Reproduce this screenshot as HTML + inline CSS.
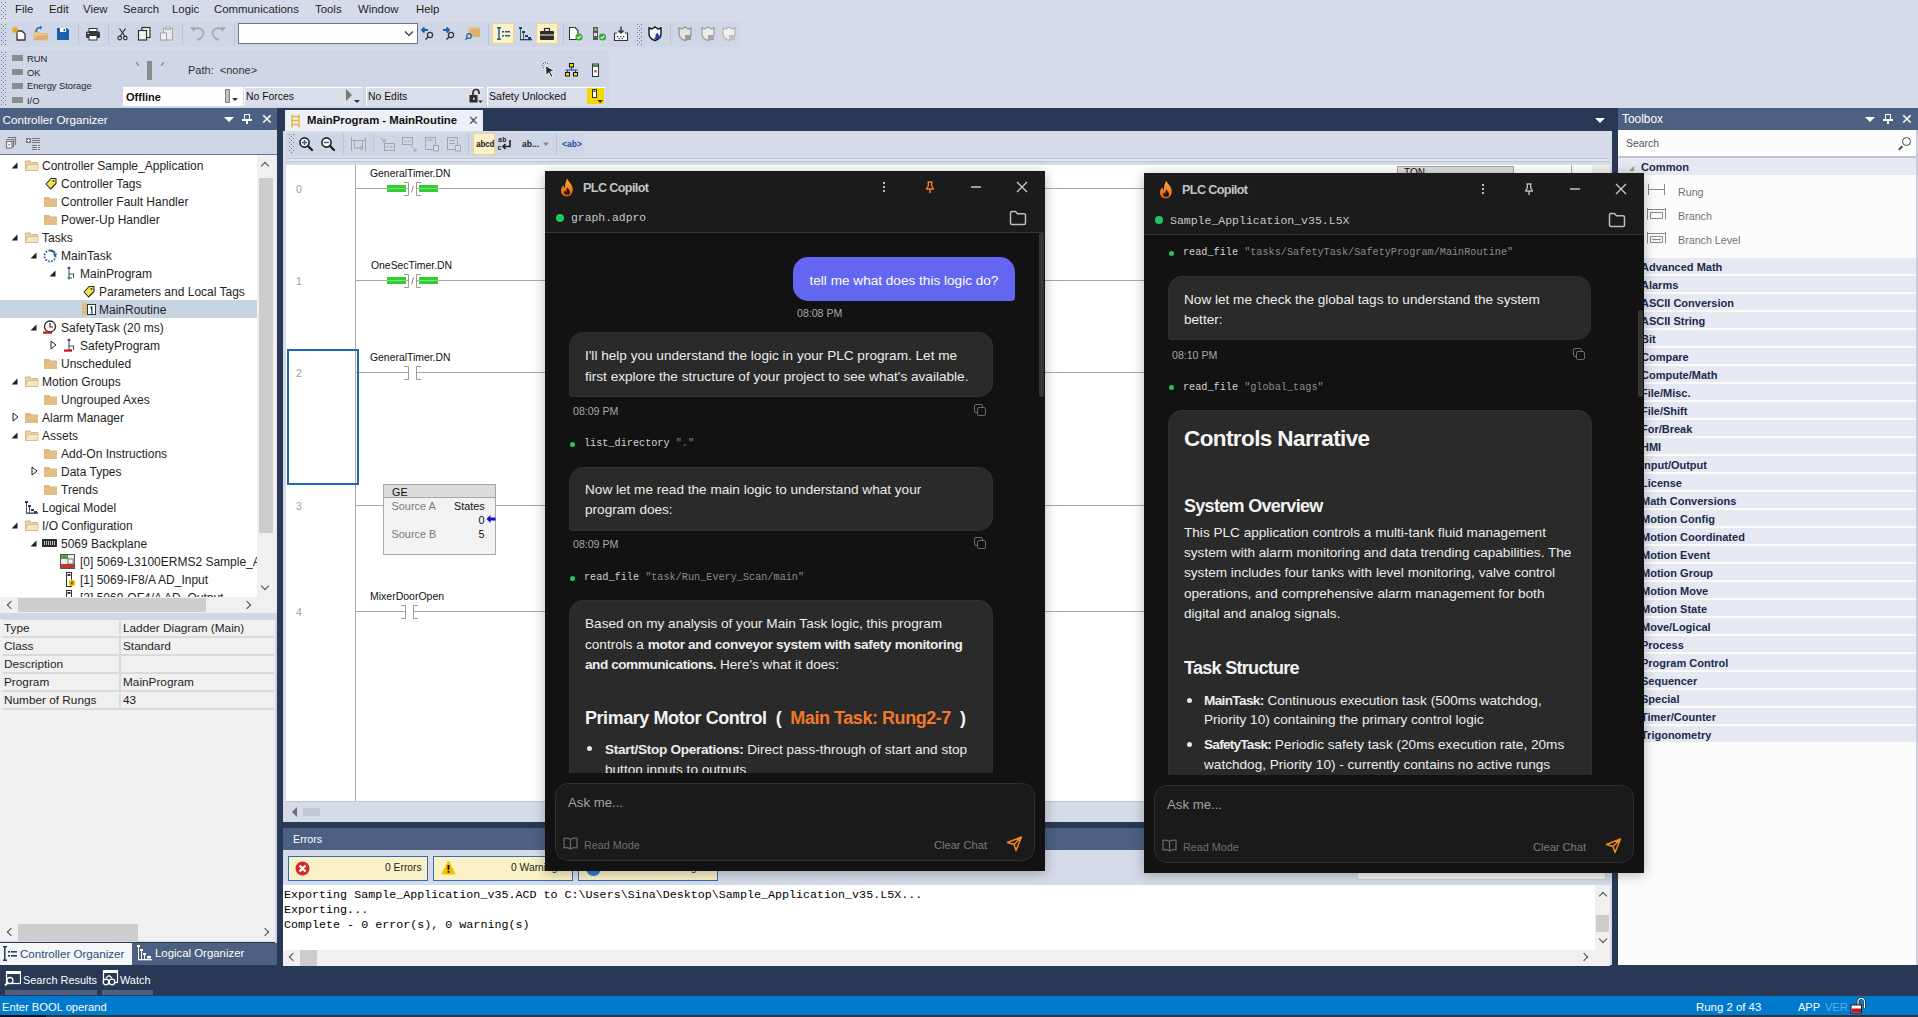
<!DOCTYPE html>
<html><head><meta charset="utf-8">
<style>
*{box-sizing:border-box;margin:0;padding:0}
html,body{width:1918px;height:1017px;overflow:hidden;background:#D6DBE9;font-family:"Liberation Sans",sans-serif;font-size:12px;color:#1E1E1E}
.a{position:absolute}
.t{position:absolute;white-space:nowrap;line-height:1}
.mono{font-family:"Liberation Mono",monospace}
/* ---------- IDE ---------- */
#menu .t{top:4px;font-size:11.4px;color:#1E1E1E}
.grip{position:absolute;width:5px;background-image:radial-gradient(circle at 1px 1px,#6F7C96 0.75px,transparent 0.8px),radial-gradient(circle at 1px 1px,#6F7C96 0.75px,transparent 0.8px);background-size:4px 4px,4px 4px;background-position:0 0,2px 2px}
.tree .row{position:absolute;left:0;height:18px;width:257px}
.tree .row .t{top:4px;font-size:12px;color:#1E1E1E}
.tri{position:absolute;width:0;height:0}
.tri.open{border-left:6px solid transparent;border-bottom:6px solid #1E1E1E;top:6px}
.tri.closed{border-top:5px solid transparent;border-bottom:5px solid transparent;border-left:6px solid #fff;top:4px}
.fold{position:absolute;top:4px;width:14px;height:11px;background:#DCB67A;border-radius:1px}
.prop .r{position:absolute;left:3px;width:271px;height:18px;border-bottom:2px solid #DADADA}
.prop .t{top:3px;font-size:11.8px}
.tb .t{font-size:12px;top:0}
.tbx .cat{position:absolute;left:1622px;width:293px;height:16px;background:#E6E9F2}
.tbx .cat .t{left:20px;top:2px;font-weight:bold;font-size:12px;color:#1B2A4A}
/* ---------- CHAT ---------- */
.chat{position:absolute;width:500px;height:700px;background:#111111;box-shadow:0 0 10px rgba(0,0,0,.35);overflow:hidden;color:#E6E6E6}
.chat .hdr{position:absolute;left:0;top:0;width:500px;height:61px;background:#1B1B1B;border-bottom:1px solid #333}
.chat .ttl{position:absolute;left:37px;top:10px;font-size:13px;font-weight:bold;color:#CFCFCF}
.chat .fname{position:absolute;left:26px;top:41px;font-size:12px;color:#C8C8C8}
.chat .dot{position:absolute;left:10px;top:43px;width:8px;height:8px;border-radius:50%;background:#22C55E}
.bub{position:absolute;background:#2A2A2A;border-radius:14px;color:#EDEDED;font-size:14px;line-height:21px}
.ubub{position:absolute;background:#6366F1;border-radius:14px;color:#fff;font-size:14px;line-height:21px}
.time{position:absolute;font-size:11px;color:#A8A8A8}
.tool{position:absolute;font-size:11px;color:#D0D0D0}
.tool i{font-style:normal;color:#8A8A8A}
.tool b{position:absolute;left:-12px;top:5px;width:5px;height:5px;border-radius:50%;background:#22C55E}
.inp{position:absolute;left:10px;top:612px;width:480px;height:78px;background:#1A1A1A;border:1px solid #2E2E2E;border-radius:12px}
.inp .ph{position:absolute;left:12px;top:12px;font-size:14px;color:#A0A0A0}
.inp .rm{position:absolute;left:28px;top:53px;font-size:11px;color:#6B6B6B}
.inp .cc{position:absolute;left:378px;top:52px;font-size:11px;color:#767676}
</style></head><body>
<svg width="0" height="0" style="position:absolute"><defs><pattern id="gp" width="4" height="4" patternUnits="userSpaceOnUse"><rect x="1" y="0" width="1" height="1" fill="#66738F"/><rect x="3" y="2" width="1" height="1" fill="#66738F"/></pattern></defs></svg>

<!-- MENU -->
<div id="menu" class="a" style="left:0;top:0;width:1918px;height:20px;background:#D6DBE9">
  <svg class="a" style="left:0px;top:2px" width="6" height="17"><rect width="6" height="17" fill="url(#gp)"/></svg>
  <span class="t" style="left:15px">File</span>
  <span class="t" style="left:49px">Edit</span>
  <span class="t" style="left:83px">View</span>
  <span class="t" style="left:123px">Search</span>
  <span class="t" style="left:172px">Logic</span>
  <span class="t" style="left:214px">Communications</span>
  <span class="t" style="left:315px">Tools</span>
  <span class="t" style="left:358px">Window</span>
  <span class="t" style="left:416px">Help</span>
</div>


<!-- TOOLBAR -->
<div class="a" style="left:0;top:22px;width:632px;height:25px;background:#CFD6E5"></div>
<div class="a" style="left:632px;top:22px;width:108px;height:25px;background:#CFD6E5"></div>
<svg class="a" style="left:0px;top:24px" width="6" height="21"><rect width="6" height="21" fill="url(#gp)"/></svg>
<svg class="a" style="left:0;top:0" width="740" height="50" viewBox="0 0 740 50">
 <!-- new -->
 <g transform="translate(11,26)">
  <path d="M6 5 H11 L14 8 V14 H6 Z" fill="#fff" stroke="#333" stroke-width="1.3" stroke-linejoin="round"/>
  <g stroke="#E8A317" stroke-width="1.1"><path d="M4 0.5 V7.5 M0.5 4 H7.5 M1.5 1.5 L6.5 6.5 M6.5 1.5 L1.5 6.5"/></g>
 </g>
 <!-- open -->
 <g transform="translate(33,26)">
  <path d="M1 6 H6 L7.5 7.5 H14.5 V14 H1 Z" fill="#EBCB94" stroke="#DDB26F" stroke-width="0.8"/>
  <path d="M1 14 L3.5 9.5 H15 L13 14 Z" fill="#DDAF68"/>
  <path d="M3 6 C3 2.5 5 1.5 8 1.5" stroke="#1F6FC5" stroke-width="1.6" fill="none"/>
  <path d="M7 -0.5 L9.5 1.5 L7 3.5 Z" fill="#1F6FC5"/>
 </g>
 <!-- save -->
 <g transform="translate(57,28)">
  <path d="M0 0 H10 L12 2 V12 H0 Z" fill="#1B5FAE"/>
  <rect x="3" y="0" width="6" height="4" fill="#fff"/><rect x="6.5" y="0.8" width="1.5" height="2.5" fill="#1B5FAE"/>
  <rect x="2.5" y="7" width="7" height="5" fill="#1B5FAE" stroke="#fff" stroke-width="0"/>
 </g>
 <line x1="78.5" y1="24" x2="78.5" y2="45" stroke="#BCC5D8"/>
 <!-- print -->
 <g transform="translate(86,28)">
  <rect x="3" y="0.5" width="8" height="3" fill="#fff" stroke="#333"/>
  <rect x="0" y="3.5" width="14" height="6.5" rx="1" fill="#3A3A3A"/>
  <rect x="3" y="7.5" width="8" height="4.5" fill="#fff" stroke="#333"/>
  <rect x="1.5" y="5" width="1.5" height="1" fill="#fff"/>
 </g>
 <line x1="108.5" y1="24" x2="108.5" y2="45" stroke="#BCC5D8"/>
 <!-- cut -->
 <g transform="translate(117,28)" stroke="#333" stroke-width="1.2" fill="none">
  <path d="M2.5 0.5 L8 8.5 M8.5 0.5 L3 8.5"/>
  <circle cx="2.7" cy="10" r="1.8"/><circle cx="8.3" cy="10" r="1.8"/>
 </g>
 <!-- copy -->
 <g transform="translate(138,27)">
  <rect x="4" y="0.5" width="8" height="10" fill="#F2F2F2" stroke="#333" stroke-width="1.2"/>
  <rect x="0.5" y="3.5" width="8" height="9.5" fill="#F2F2F2" stroke="#333" stroke-width="1.2"/>
 </g>
 <!-- paste -->
 <g transform="translate(160,27)">
  <rect x="3.5" y="1.5" width="9" height="11.5" fill="#E9E9E9" stroke="#A8A8A8" stroke-width="1.1"/>
  <rect x="6" y="0" width="4" height="2.5" fill="#E9E9E9" stroke="#A8A8A8"/>
  <rect x="0.5" y="6" width="6" height="7" fill="#F2F2F2" stroke="#A8A8A8" stroke-width="1.1"/>
 </g>
 <line x1="182.5" y1="24" x2="182.5" y2="45" stroke="#BCC5D8"/>
 <!-- undo / redo -->
 <path d="M193 30 C198 26 205 29 203 35 C202 38 199 39.5 197 40" stroke="#A8A8A8" stroke-width="1.8" fill="none"/>
 <path d="M190 27.5 L195 27 L194 32 Z" fill="#A8A8A8"/>
 <path d="M223 30 C218 26 211 29 213 35 C214 38 217 39.5 219 40" stroke="#A8A8A8" stroke-width="1.8" fill="none"/>
 <path d="M226 27.5 L221 27 L222 32 Z" fill="#A8A8A8"/>
 <line x1="234.5" y1="24" x2="234.5" y2="45" stroke="#BCC5D8"/>
 <!-- combo -->
 <rect x="238.5" y="23.5" width="179" height="20" fill="#fff" stroke="#6D7482"/>
 <path d="M405 31.5 L409 35.5 L413 31.5" stroke="#333" stroke-width="1.2" fill="none"/>
 <!-- find prev/next -->
 <g transform="translate(421,27)">
  <path d="M1 3 H7 M3.5 0.5 L1 3 L3.5 5.5" stroke="#1F5FAF" stroke-width="1.8" fill="none"/>
  <circle cx="9" cy="8" r="2.6" fill="none" stroke="#333" stroke-width="1.2"/><path d="M7 10 L4.5 12.5" stroke="#333" stroke-width="1.5"/>
 </g>
 <g transform="translate(442,27)">
  <path d="M1 3 H7 M4.5 0.5 L7 3 L4.5 5.5" stroke="#1F5FAF" stroke-width="1.8" fill="none"/>
  <circle cx="9" cy="8" r="2.6" fill="none" stroke="#333" stroke-width="1.2"/><path d="M7 10 L4.5 12.5" stroke="#333" stroke-width="1.5"/>
 </g>
 <!-- find folder -->
 <g transform="translate(465,26)">
  <rect x="3" y="1" width="12" height="9" fill="#E6C38A"/>
  <rect x="5" y="3" width="10" height="8" fill="#DDB26F"/>
  <circle cx="4" cy="10" r="2.3" fill="none" stroke="#1F5FAF" stroke-width="1.2"/><path d="M2.3 11.8 L0.5 13.6" stroke="#1F5FAF" stroke-width="1.5"/>
 </g>
 <line x1="488.5" y1="24" x2="488.5" y2="45" stroke="#BCC5D8"/>
 <!-- highlighted btn 1 -->
 <rect x="492.5" y="23.5" width="21" height="20" fill="#FDF1C9" stroke="#EED28D"/>
 <g transform="translate(497,27)" fill="#1F5F9E">
  <rect x="0" y="0" width="4" height="1.5"/><rect x="1.2" y="0" width="1.5" height="13"/><rect x="0" y="11.5" width="4" height="1.5"/>
  <rect x="5" y="4" width="2" height="1.5"/><rect x="8" y="4" width="5" height="1.5"/>
  <rect x="5" y="8" width="2" height="1.5"/><rect x="8" y="8" width="5" height="1.5"/>
 </g>
 <!-- logical org -->
 <g transform="translate(519,27)" fill="#1F3F66">
  <rect x="0" y="0" width="3" height="2"/><rect x="1" y="2" width="1" height="11" fill="#555"/>
  <rect x="3" y="4" width="3" height="2"/><rect x="4" y="6" width="1" height="6" fill="#555"/>
  <rect x="6" y="8" width="3" height="2"/><rect x="1" y="12" width="12" height="1.3"/>
  <rect x="9" y="10" width="3" height="2"/>
 </g>
 <!-- highlighted btn 3 toolbox -->
 <rect x="536.5" y="23.5" width="21" height="20" fill="#FDF1C9" stroke="#EED28D"/>
 <g transform="translate(540,28)">
  <rect x="4.5" y="0.5" width="5" height="3" fill="none" stroke="#2B2B2B" stroke-width="1.2"/>
  <rect x="0" y="3" width="14" height="9" rx="1" fill="#2B2B2B"/>
  <rect x="0" y="6.5" width="14" height="1" fill="#FDF1C9"/>
 </g>
 <line x1="563.5" y1="24" x2="563.5" y2="45" stroke="#BCC5D8"/>
 <!-- verify doc -->
 <g transform="translate(569,27)">
  <path d="M0.5 0.5 H6 L9 3.5 V12.5 H0.5 Z" fill="#fff" stroke="#333" stroke-width="1.1"/>
  <circle cx="10" cy="10" r="3.6" fill="#3DA642"/><path d="M8.3 10 L9.5 11.3 L11.8 8.8" stroke="#fff" stroke-width="1.1" fill="none"/>
 </g>
 <g transform="translate(593,27)">
  <rect x="0" y="0" width="5" height="13" fill="#5A5A5A"/><rect x="1" y="1.5" width="3" height="2" fill="#9BC47A"/><rect x="1" y="6" width="3" height="3" fill="#ddd"/>
  <circle cx="9.5" cy="10" r="3.6" fill="#3DA642"/><path d="M7.8 10 L9 11.3 L11.3 8.8" stroke="#fff" stroke-width="1.1" fill="none"/>
 </g>
 <g transform="translate(614,26)">
  <path d="M0.5 7 H3 M11 7 H13.5 V14.5 H0.5 V7" stroke="#333" stroke-width="1.2" fill="#fff"/>
  <path d="M7 0.5 V7 M4.5 4.5 L7 7 L9.5 4.5" stroke="#333" stroke-width="1.5" fill="none"/>
  <g fill="#333"><rect x="3" y="10" width="1.3" height="1.3"/><rect x="6" y="10" width="1.3" height="1.3"/><rect x="9" y="10" width="1.3" height="1.3"/><rect x="4.5" y="12" width="1.3" height="1.3"/><rect x="7.5" y="12" width="1.3" height="1.3"/></g>
 </g>
 <!-- shield wrench -->
 <g transform="translate(648,26)">
  <path d="M1 2 L4 3 L7 0.8 L10 3 L13 2 V8 C13 11 10 13.5 7 14.5 C4 13.5 1 11 1 8 Z" fill="#fff" stroke="#111" stroke-width="1.4"/>
  <path d="M7 13 L11 9 M10 8 A2 2 0 1 0 12.5 10" stroke="#1A3FA0" stroke-width="2" fill="none"/>
 </g>
 <line x1="670.5" y1="24" x2="670.5" y2="45" stroke="#BCC5D8"/>
 <g transform="translate(678,26)">
  <path d="M1 2 L4 3 L7 0.8 L10 3 L13 2 V8 C13 11 10 13.5 7 14.5 C4 13.5 1 11 1 8 Z" fill="#E4E4E4" stroke="#9A9A9A" stroke-width="1.4"/>
  <rect x="7" y="9" width="6" height="5" fill="#9A9A9A"/>
 </g>
 <g transform="translate(701,26)">
  <path d="M1 2 L4 3 L7 0.8 L10 3 L13 2 V8 C13 11 10 13.5 7 14.5 C4 13.5 1 11 1 8 Z" fill="#EDEDED" stroke="#A5A5A5" stroke-width="1.4"/>
  <rect x="7" y="9" width="6" height="5" fill="#A5A5A5"/>
 </g>
 <g transform="translate(722,26)">
  <path d="M1 2 L4 3 L7 0.8 L10 3 L13 2 V8 C13 11 10 13.5 7 14.5 C4 13.5 1 11 1 8 Z" fill="#F0F0F0" stroke="#B8B8B8" stroke-width="1.4"/>
  <rect x="7" y="9" width="6" height="5" fill="#C0C0C0"/>
 </g>
</svg>
<svg class="a" style="left:636px;top:24px" width="6" height="21"><rect width="6" height="21" fill="url(#gp)"/></svg>

<!-- STATUS ROW -->
<div class="a" style="left:0;top:50px;width:609px;height:58px;background:#CFD6E5"></div>
<svg class="a" style="left:0px;top:52px" width="6" height="54"><rect width="6" height="54" fill="url(#gp)"/></svg>
<div class="a" style="left:12px;top:55px;width:11px;height:6px;background:#8C8C8C"></div>
<div class="a" style="left:12px;top:69px;width:11px;height:6px;background:#8C8C8C"></div>
<div class="a" style="left:12px;top:83px;width:11px;height:6px;background:#8C8C8C"></div>
<div class="a" style="left:12px;top:97px;width:11px;height:6px;background:#8C8C8C"></div>
<span class="t" style="left:27px;top:53.8px;font-size:9.4px">RUN</span>
<span class="t" style="left:27px;top:67.8px;font-size:9.4px">OK</span>
<span class="t" style="left:27px;top:82px;font-size:9.3px">Energy Storage</span>
<span class="t" style="left:27px;top:95.6px;font-size:9.4px">I/O</span>
<div class="a" style="left:147px;top:61px;width:5px;height:19px;background:#8C8C8C"></div>
<div class="a" style="left:137px;top:62px;width:1px;height:4px;background:#666;transform:rotate(-40deg)"></div>
<div class="a" style="left:162px;top:62px;width:1px;height:4px;background:#666;transform:rotate(40deg)"></div>
<span class="t" style="left:188px;top:65px;font-size:11px;color:#333">Path:&nbsp; &lt;none&gt;</span>
<svg class="a" style="left:542px;top:62px" width="60" height="17">
 <g fill="#555"><rect x="1" y="1" width="1" height="1"/><rect x="3" y="0" width="1" height="1"/><rect x="5" y="1" width="1" height="1"/><rect x="0" y="3" width="1" height="1"/><rect x="1" y="5" width="1" height="1"/></g>
 <path d="M3.5 3.5 L12.5 9 L8.5 9.8 L11 14.5 L9.2 15.3 L6.8 10.8 L4 13.5 Z" fill="#2B2B2B" stroke="#fff" stroke-width="0.9" stroke-linejoin="round"/>
 <rect x="27.5" y="1.5" width="4" height="3.5" fill="#F5E000" stroke="#111" stroke-width="1"/>
 <path d="M29.5 5 V8 M23.5 8 H35.5 M25.5 8 V10.5 M33.5 8 V10.5" stroke="#1A3FC0" stroke-width="1.2" fill="none"/>
 <rect x="23.5" y="10.5" width="4" height="3.5" fill="#F5E000" stroke="#111" stroke-width="1"/>
 <rect x="31.5" y="10.5" width="4" height="3.5" fill="#F5E000" stroke="#111" stroke-width="1"/>
 <rect x="50.5" y="2" width="6" height="12.5" fill="#fff" stroke="#333" stroke-width="1"/>
 <rect x="51" y="2.5" width="5" height="2.5" fill="#4A8A4A"/>
 <rect x="52.3" y="8" width="2.5" height="2.5" fill="#777"/>
</svg>
<div class="a" style="left:123px;top:87px;width:120px;height:19px;background:#fff"></div>
<span class="t" style="left:126px;top:92.3px;font-size:11px;font-weight:bold;color:#111">Offline</span>
<div class="a" style="left:225px;top:89px;width:5px;height:14px;background:#BDBDBD;border:1px solid #888"></div>
<div class="a" style="left:232px;top:98px;width:0;height:0;border-left:3px solid transparent;border-right:3px solid transparent;border-top:3px solid #333"></div>
<div class="a" style="left:244px;top:87px;width:119px;height:19px;background:#D9DEEA;border-top:1px solid #fff;border-left:1px solid #fff"></div>
<span class="t" style="left:246px;top:91.8px;font-size:10.4px;color:#111">No Forces</span>
<div class="a" style="left:346px;top:89px;width:0;height:0;border-top:6px solid transparent;border-bottom:6px solid transparent;border-left:6px solid #777"></div>
<div class="a" style="left:354px;top:100px;width:0;height:0;border-left:3px solid transparent;border-right:3px solid transparent;border-top:3px solid #333"></div>
<div class="a" style="left:366px;top:87px;width:118px;height:19px;background:#D9DEEA;border-top:1px solid #fff;border-left:1px solid #fff"></div>
<span class="t" style="left:368px;top:91.8px;font-size:10.4px;color:#111">No Edits</span>
<svg class="a" style="left:468px;top:88px" width="16" height="17"><path d="M5 7 V4.5 A3 3 0 0 1 11 4.5 V6" stroke="#2B2B2B" stroke-width="1.7" fill="none"/><rect x="1.5" y="7" width="8" height="7.5" fill="#2B2B2B"/><rect x="5" y="9.5" width="1.5" height="2.5" fill="#ddd"/><path d="M10 12.5 H15 L12.5 15 Z" fill="#2B2B2B"/></svg>
<div class="a" style="left:487px;top:87px;width:119px;height:19px;background:#D9DEEA;border-top:1px solid #fff;border-left:1px solid #fff"></div>
<span class="t" style="left:489px;top:91.2px;font-size:10.6px;color:#111">Safety Unlocked</span>
<svg class="a" style="left:587px;top:87px" width="18" height="19"><rect x="0" y="1" width="17" height="16" fill="#F5D800"/><rect x="5.5" y="2.5" width="4" height="8" fill="#fff" stroke="#333" stroke-width="1"/><rect x="6.5" y="3.5" width="2" height="1.5" fill="#333"/><path d="M10.5 13 H16 L13.2 16 Z" fill="#2B2B2B"/></svg>

<!-- NAVY BACKGROUND -->
<div class="a" style="left:0;top:108px;width:1918px;height:888px;background:#293955"></div>


<!-- CONTROLLER ORGANIZER -->
<div class="a" style="left:0;top:108px;width:277px;height:22px;background:#4D6082"></div>
<span class="t" style="left:2.5px;top:114px;font-size:11.7px;color:#fff">Controller Organizer</span>
<div class="a" style="left:224px;top:117px;width:0;height:0;border-left:5px solid transparent;border-right:5px solid transparent;border-top:5px solid #fff"></div>
<div class="a" style="left:244px;top:114px;width:6px;height:6px;border:1.5px solid #fff;border-top-width:1px"></div>
<div class="a" style="left:246px;top:120px;width:1.5px;height:4px;background:#fff"></div>
<div class="a" style="left:242px;top:119px;width:10px;height:1.5px;background:#fff"></div>
<span class="t" style="left:261px;top:112px;font-size:14px;color:#fff">&#10005;</span>
<div class="a" style="left:0;top:130px;width:277px;height:25px;background:#CFD6E5"></div>
<svg class="a" style="left:5px;top:136px" width="38" height="15">
 <path d="M10.5 9 V1.5 H3" stroke="#777" stroke-width="1.2" fill="none"/>
 <path d="M8.5 11 V3.5 H1" stroke="#777" stroke-width="1.2" fill="none"/>
 <rect x="1.5" y="5.5" width="5.5" height="6.5" fill="#fff" stroke="#777" stroke-width="1.2"/>
 <rect x="3" y="8.3" width="2.5" height="1" fill="#777"/>
 <rect x="21" y="2" width="5" height="5" fill="#777"/><path d="M23.5 3 V6 M22 4.5 H25" stroke="#fff" stroke-width="1"/>
 <g fill="#777"><rect x="27" y="2" width="8" height="1"/><rect x="27" y="4" width="8" height="1"/><rect x="27" y="6" width="8" height="1"/>
 <rect x="27" y="9" width="5" height="1"/><rect x="33" y="9" width="2" height="1"/><rect x="27" y="11" width="5" height="1"/><rect x="33" y="11" width="2" height="1"/><rect x="27" y="13" width="5" height="1"/><rect x="33" y="13" width="2" height="1"/></g>
</svg>
<div class="a" style="left:0;top:154px;width:277px;height:1px;background:#6E7588"></div>
<div class="a tree" style="left:0;top:155px;width:257px;height:442px;background:#fff;overflow:hidden">
<div style="position:absolute;left:0;top:-155px;width:277px;height:800px">
<div class="row" style="top:156px"><svg class="a" style="left:11px;top:6px" width="7" height="7"><path d="M6.5 0.5 V6.5 H0.5 Z" fill="#1E1E1E"/></svg><svg class="a" style="left:25px;top:3px" width="16" height="16"><path d="M0.5 2 H5 L6.5 3.5 H12.5 V11.5 H0.5 Z" fill="#E9D3A9" stroke="#D9B779" stroke-width="1"/><path d="M0.5 11.5 L2.5 5.5 H13.5 L12.5 11.5 Z" fill="#F3E6CC" stroke="#D9B779" stroke-width="0.8"/></svg><span class="t" style="left:42px">Controller Sample_Application</span></div>
<div class="row" style="top:174px"><svg class="a" style="left:45px;top:3px" width="16" height="16"><path d="M1 7 L6 1.5 H11 V6.5 L5.5 12 Z" fill="#F0E44A" stroke="#2B2B2B" stroke-width="1.1" stroke-linejoin="round"/><circle cx="8.5" cy="4" r="0.9" fill="#2B2B2B"/></svg><span class="t" style="left:61px">Controller Tags</span></div>
<div class="row" style="top:192px"><svg class="a" style="left:44px;top:3px" width="16" height="16"><path d="M0 2 H5 L6.5 3.5 H13 V12 H0 Z" fill="#DDB77A"/><rect x="0" y="4.5" width="13" height="7.5" fill="#E3BF85"/></svg><span class="t" style="left:61px">Controller Fault Handler</span></div>
<div class="row" style="top:210px"><svg class="a" style="left:44px;top:3px" width="16" height="16"><path d="M0 2 H5 L6.5 3.5 H13 V12 H0 Z" fill="#DDB77A"/><rect x="0" y="4.5" width="13" height="7.5" fill="#E3BF85"/></svg><span class="t" style="left:61px">Power-Up Handler</span></div>
<div class="row" style="top:228px"><svg class="a" style="left:11px;top:6px" width="7" height="7"><path d="M6.5 0.5 V6.5 H0.5 Z" fill="#1E1E1E"/></svg><svg class="a" style="left:25px;top:3px" width="16" height="16"><path d="M0.5 2 H5 L6.5 3.5 H12.5 V11.5 H0.5 Z" fill="#E9D3A9" stroke="#D9B779" stroke-width="1"/><path d="M0.5 11.5 L2.5 5.5 H13.5 L12.5 11.5 Z" fill="#F3E6CC" stroke="#D9B779" stroke-width="0.8"/></svg><span class="t" style="left:42px">Tasks</span></div>
<div class="row" style="top:246px"><svg class="a" style="left:30px;top:6px" width="7" height="7"><path d="M6.5 0.5 V6.5 H0.5 Z" fill="#1E1E1E"/></svg><svg class="a" style="left:43px;top:3px" width="16" height="16"><path d="M7 1.5 A5.5 5.5 0 1 0 12.5 7" stroke="#1F5F9E" stroke-width="1.8" stroke-dasharray="1.6 1.4" fill="none"/><path d="M7 1.5 A5.5 5.5 0 0 1 12 4.5" stroke="#1F5F9E" stroke-width="1.8" fill="none"/><path d="M10 5 L14 4.5 L12.5 8.5 Z" fill="#1F5F9E"/></svg><span class="t" style="left:61px">MainTask</span></div>
<div class="row" style="top:264px"><svg class="a" style="left:49px;top:6px" width="7" height="7"><path d="M6.5 0.5 V6.5 H0.5 Z" fill="#1E1E1E"/></svg><svg class="a" style="left:66px;top:2px" width="16" height="16"><circle cx="3" cy="2" r="1.6" fill="#7A3E9D"/><path d="M3 3.5 V12 H6" stroke="#1F5F9E" stroke-width="1.1" fill="none"/><path d="M3 8 H7.5 V12" stroke="#555" stroke-width="1.1" fill="none"/><circle cx="3" cy="12" r="1.6" fill="#3DA642"/></svg><span class="t" style="left:80px">MainProgram</span></div>
<div class="row" style="top:282px"><svg class="a" style="left:83px;top:3px" width="16" height="16"><path d="M1 7 L6 1.5 H11 V6.5 L5.5 12 Z" fill="#F0E44A" stroke="#2B2B2B" stroke-width="1.1" stroke-linejoin="round"/><circle cx="8.5" cy="4" r="0.9" fill="#2B2B2B"/></svg><span class="t" style="left:99px">Parameters and Local Tags</span></div>
<div class="row" style="top:300px;background:#C9D4E3"><svg class="a" style="left:82px;top:2px" width="16" height="16"><path d="M1 0.5 V13.5 M4 0.5 V13.5 M1 3 H4 M1 6.5 H4 M1 10 H4" stroke="#E0B040" stroke-width="1.2"/><rect x="5.5" y="2.5" width="8" height="10" fill="#fff" stroke="#333" stroke-width="1"/><path d="M8.5 5 L10 4.5 V11 M8.5 11 H11" stroke="#1F5F9E" stroke-width="1"/></svg><span class="t" style="left:99px">MainRoutine</span></div>
<div class="row" style="top:318px"><svg class="a" style="left:30px;top:6px" width="7" height="7"><path d="M6.5 0.5 V6.5 H0.5 Z" fill="#1E1E1E"/></svg><svg class="a" style="left:43px;top:2px" width="16" height="16"><circle cx="7" cy="6.5" r="5.5" fill="#fff" stroke="#2B2B2B" stroke-width="1.3"/><path d="M7 3 V7 H10" stroke="#2B2B2B" stroke-width="1.2" fill="none"/><rect x="0" y="11.5" width="9" height="2.2" fill="#D01010"/></svg><span class="t" style="left:61px">SafetyTask (20 ms)</span></div>
<div class="row" style="top:336px"><svg class="a" style="left:50px;top:4px" width="7" height="10"><path d="M1 1 L6 5 L1 9 Z" fill="#fff" stroke="#1E1E1E" stroke-width="1"/></svg><svg class="a" style="left:64px;top:2px" width="16" height="16"><circle cx="5" cy="2" r="1.6" fill="#7A3E9D"/><path d="M5 3.5 V12 H8" stroke="#1F5F9E" stroke-width="1.1" fill="none"/><path d="M5 8 H9.5 V12" stroke="#555" stroke-width="1.1" fill="none"/><rect x="0" y="11.5" width="8" height="2.2" fill="#D01010"/></svg><span class="t" style="left:80px">SafetyProgram</span></div>
<div class="row" style="top:354px"><svg class="a" style="left:44px;top:3px" width="16" height="16"><path d="M0 2 H5 L6.5 3.5 H13 V12 H0 Z" fill="#DDB77A"/><rect x="0" y="4.5" width="13" height="7.5" fill="#E3BF85"/></svg><span class="t" style="left:61px">Unscheduled</span></div>
<div class="row" style="top:372px"><svg class="a" style="left:11px;top:6px" width="7" height="7"><path d="M6.5 0.5 V6.5 H0.5 Z" fill="#1E1E1E"/></svg><svg class="a" style="left:25px;top:3px" width="16" height="16"><path d="M0.5 2 H5 L6.5 3.5 H12.5 V11.5 H0.5 Z" fill="#E9D3A9" stroke="#D9B779" stroke-width="1"/><path d="M0.5 11.5 L2.5 5.5 H13.5 L12.5 11.5 Z" fill="#F3E6CC" stroke="#D9B779" stroke-width="0.8"/></svg><span class="t" style="left:42px">Motion Groups</span></div>
<div class="row" style="top:390px"><svg class="a" style="left:44px;top:3px" width="16" height="16"><path d="M0 2 H5 L6.5 3.5 H13 V12 H0 Z" fill="#DDB77A"/><rect x="0" y="4.5" width="13" height="7.5" fill="#E3BF85"/></svg><span class="t" style="left:61px">Ungrouped Axes</span></div>
<div class="row" style="top:408px"><svg class="a" style="left:12px;top:4px" width="7" height="10"><path d="M1 1 L6 5 L1 9 Z" fill="#fff" stroke="#1E1E1E" stroke-width="1"/></svg><svg class="a" style="left:25px;top:3px" width="16" height="16"><path d="M0 2 H5 L6.5 3.5 H13 V12 H0 Z" fill="#DDB77A"/><rect x="0" y="4.5" width="13" height="7.5" fill="#E3BF85"/></svg><span class="t" style="left:42px">Alarm Manager</span></div>
<div class="row" style="top:426px"><svg class="a" style="left:11px;top:6px" width="7" height="7"><path d="M6.5 0.5 V6.5 H0.5 Z" fill="#1E1E1E"/></svg><svg class="a" style="left:25px;top:3px" width="16" height="16"><path d="M0.5 2 H5 L6.5 3.5 H12.5 V11.5 H0.5 Z" fill="#E9D3A9" stroke="#D9B779" stroke-width="1"/><path d="M0.5 11.5 L2.5 5.5 H13.5 L12.5 11.5 Z" fill="#F3E6CC" stroke="#D9B779" stroke-width="0.8"/></svg><span class="t" style="left:42px">Assets</span></div>
<div class="row" style="top:444px"><svg class="a" style="left:44px;top:3px" width="16" height="16"><path d="M0 2 H5 L6.5 3.5 H13 V12 H0 Z" fill="#DDB77A"/><rect x="0" y="4.5" width="13" height="7.5" fill="#E3BF85"/></svg><span class="t" style="left:61px">Add-On Instructions</span></div>
<div class="row" style="top:462px"><svg class="a" style="left:31px;top:4px" width="7" height="10"><path d="M1 1 L6 5 L1 9 Z" fill="#fff" stroke="#1E1E1E" stroke-width="1"/></svg><svg class="a" style="left:44px;top:3px" width="16" height="16"><path d="M0 2 H5 L6.5 3.5 H13 V12 H0 Z" fill="#DDB77A"/><rect x="0" y="4.5" width="13" height="7.5" fill="#E3BF85"/></svg><span class="t" style="left:61px">Data Types</span></div>
<div class="row" style="top:480px"><svg class="a" style="left:44px;top:3px" width="16" height="16"><path d="M0 2 H5 L6.5 3.5 H13 V12 H0 Z" fill="#DDB77A"/><rect x="0" y="4.5" width="13" height="7.5" fill="#E3BF85"/></svg><span class="t" style="left:61px">Trends</span></div>
<div class="row" style="top:498px"><svg class="a" style="left:25px;top:3px" width="16" height="16"><g fill="#1F3F66"><rect x="0" y="0" width="3" height="2"/><rect x="3" y="4" width="3" height="2"/><rect x="6" y="8" width="3" height="2"/><rect x="9" y="10" width="3" height="2"/><rect x="1" y="11.5" width="12" height="1.3"/></g><rect x="1" y="2" width="1" height="10" fill="#555"/><rect x="4" y="6" width="1" height="6" fill="#555"/></svg><span class="t" style="left:42px">Logical Model</span></div>
<div class="row" style="top:516px"><svg class="a" style="left:11px;top:6px" width="7" height="7"><path d="M6.5 0.5 V6.5 H0.5 Z" fill="#1E1E1E"/></svg><svg class="a" style="left:25px;top:3px" width="16" height="16"><path d="M0.5 2 H5 L6.5 3.5 H12.5 V11.5 H0.5 Z" fill="#E9D3A9" stroke="#D9B779" stroke-width="1"/><path d="M0.5 11.5 L2.5 5.5 H13.5 L12.5 11.5 Z" fill="#F3E6CC" stroke="#D9B779" stroke-width="0.8"/></svg><span class="t" style="left:42px">I/O Configuration</span></div>
<div class="row" style="top:534px"><svg class="a" style="left:30px;top:6px" width="7" height="7"><path d="M6.5 0.5 V6.5 H0.5 Z" fill="#1E1E1E"/></svg><svg class="a" style="left:42px;top:2px" width="16" height="16"><rect x="0" y="3" width="15" height="8" rx="1" fill="#2B2B2B"/><g fill="#bbb"><rect x="2" y="5" width="1" height="4"/><rect x="4" y="5" width="1" height="4"/><rect x="6" y="5" width="1" height="4"/><rect x="8" y="5" width="1" height="4"/><rect x="10" y="5" width="1" height="4"/><rect x="12" y="5" width="1" height="4"/></g></svg><span class="t" style="left:61px">5069 Backplane</span></div>
<div class="row" style="top:552px"><svg class="a" style="left:60px;top:2px" width="16" height="16"><rect x="0.5" y="0.5" width="14" height="14" fill="#ECECEC" stroke="#555"/><rect x="1" y="1" width="7" height="4" fill="#5B9A4A"/><rect x="1" y="10" width="13" height="4" fill="#C0392B"/><rect x="8" y="5" width="5" height="5" fill="#fff" stroke="#555" stroke-width="0.8"/></svg><span class="t" style="left:80px">[0] 5069-L3100ERMS2 Sample_Application</span></div>
<div class="row" style="top:570px"><svg class="a" style="left:63px;top:2px" width="16" height="16"><rect x="3.5" y="0.5" width="5" height="14" fill="#fff" stroke="#333"/><rect x="4.5" y="2" width="3" height="2" fill="#333"/><circle cx="9" cy="11" r="3.3" fill="#F0C400"/><rect x="8" y="9.5" width="0.8" height="3" fill="#333"/><rect x="9.4" y="9.5" width="0.8" height="3" fill="#333"/></svg><span class="t" style="left:80px">[1] 5069-IF8/A AD_Input</span></div>
<div class="row" style="top:588px"><svg class="a" style="left:63px;top:2px" width="16" height="16"><rect x="3.5" y="0.5" width="5" height="14" fill="#fff" stroke="#333"/><rect x="4.5" y="2" width="3" height="2" fill="#333"/></svg><span class="t" style="left:80px">[2] 5069-OF4/A AD_Output</span></div>
</div>
</div>
<!-- tree vscroll -->
<div class="a" style="left:257px;top:155px;width:18px;height:442px;background:#F0F0F0"></div>
<div class="a" style="left:259px;top:178px;width:14px;height:355px;background:#CDCDCD"></div>
<div class="a" style="left:262px;top:163px;width:6px;height:6px;border-left:1.7px solid #4A4A4A;border-top:1.7px solid #4A4A4A;transform:rotate(45deg)"></div>
<div class="a" style="left:262px;top:583px;width:6px;height:6px;border-right:1.7px solid #4A4A4A;border-bottom:1.7px solid #4A4A4A;transform:rotate(45deg)"></div>
<div class="a" style="left:275px;top:155px;width:2px;height:458px;background:#E9ECF2"></div>
<!-- tree hscroll -->
<div class="a" style="left:0;top:597px;width:275px;height:16px;background:#F0F0F0"></div>
<div class="a" style="left:18px;top:598px;width:188px;height:14px;background:#CDCDCD"></div>
<div class="a" style="left:8px;top:602px;width:6px;height:6px;border-left:1.7px solid #4A4A4A;border-bottom:1.7px solid #4A4A4A;transform:rotate(45deg)"></div>
<div class="a" style="left:244px;top:602px;width:6px;height:6px;border-right:1.7px solid #4A4A4A;border-top:1.7px solid #4A4A4A;transform:rotate(45deg)"></div>
<!-- splitter -->
<div class="a" style="left:0;top:613px;width:277px;height:6px;background:#CFD6E5"></div>
<!-- properties -->
<div class="a prop" style="left:0;top:619px;width:277px;height:305px;background:#F0F0F0">
  <div class="a" style="left:2px;top:0;width:272px;height:92px;background:#F0F0F0;border-top:1px solid #DADADA"></div>
  <div class="a" style="left:119px;top:1px;width:2px;height:90px;background:#DADADA"></div>
  <div class="r" style="top:1px"><span class="t" style="left:1px">Type</span><span class="t" style="left:120px">Ladder Diagram (Main)</span></div>
  <div class="r" style="top:19px"><span class="t" style="left:1px">Class</span><span class="t" style="left:120px">Standard</span></div>
  <div class="r" style="top:37px"><span class="t" style="left:1px">Description</span></div>
  <div class="r" style="top:55px"><span class="t" style="left:1px">Program</span><span class="t" style="left:120px">MainProgram</span></div>
  <div class="r" style="top:73px"><span class="t" style="left:1px">Number of Rungs</span><span class="t" style="left:120px">43</span></div>
</div>
<div class="a" style="left:0;top:924px;width:277px;height:18px;background:#F0F0F0;border-bottom:1px solid #DADADA"></div>
<div class="a" style="left:18px;top:924px;width:120px;height:17px;background:#CDCDCD"></div>
<div class="a" style="left:8px;top:929px;width:6px;height:6px;border-left:1.7px solid #4A4A4A;border-bottom:1.7px solid #4A4A4A;transform:rotate(45deg)"></div>
<div class="a" style="left:262px;top:929px;width:6px;height:6px;border-right:1.7px solid #4A4A4A;border-top:1.7px solid #4A4A4A;transform:rotate(45deg)"></div>
<div class="a" style="left:275px;top:619px;width:2px;height:324px;background:#CFD6E5"></div>
<!-- bottom tabs -->
<div class="a" style="left:0;top:943px;width:132px;height:22px;background:#F5F6F8"></div>
<div class="a" style="left:132px;top:943px;width:145px;height:22px;background:#4D6082"></div>
<svg class="a" style="left:3px;top:946px" width="15" height="16"><g fill="#1F3F66"><rect x="0" y="0" width="4" height="1.5"/><rect x="1" y="0" width="1.5" height="15"/><rect x="0" y="13.5" width="4" height="1.5"/><rect x="5" y="5" width="2" height="1.6"/><rect x="8" y="5" width="6" height="1.6"/><rect x="5" y="9" width="2" height="1.6"/><rect x="8" y="9" width="6" height="1.6"/></g></svg>
<span class="t" style="left:20px;top:947.5px;font-size:11.6px;color:#1F4E79">Controller Organizer</span>
<svg class="a" style="left:137px;top:945px" width="16" height="16"><g fill="#fff"><rect x="0" y="0" width="3" height="2"/><rect x="3" y="4" width="3" height="2"/><rect x="6" y="8" width="3" height="2"/><rect x="10" y="11" width="4" height="2.5"/><rect x="1" y="14" width="14" height="1.3"/><rect x="1" y="2" width="1" height="12"/><rect x="4" y="6" width="1" height="8"/><rect x="7" y="10" width="1" height="4"/></g></svg>
<span class="t" style="left:155px;top:948px;font-size:11.4px;color:#fff">Logical Organizer</span>
<!-- search results / watch -->
<svg class="a" style="left:4px;top:971px" width="17" height="16"><rect x="2.5" y="0.5" width="14" height="12" fill="none" stroke="#fff" stroke-width="1.2"/><rect x="2.5" y="0.5" width="14" height="2.5" fill="#fff"/><circle cx="6" cy="9.5" r="3" fill="#293955" stroke="#fff" stroke-width="1.3"/><path d="M4 11.5 L1 14.5" stroke="#fff" stroke-width="1.8"/></svg>
<span class="t" style="left:23px;top:974.5px;font-size:10.9px;color:#fff">Search Results</span>
<svg class="a" style="left:101px;top:970px" width="18" height="17"><rect x="2.5" y="0.5" width="14" height="12" fill="none" stroke="#fff" stroke-width="1.2"/><rect x="2.5" y="0.5" width="14" height="2.5" fill="#fff"/><circle cx="5" cy="12" r="2.8" fill="#293955" stroke="#fff" stroke-width="1.3"/><circle cx="11" cy="12" r="2.8" fill="#293955" stroke="#fff" stroke-width="1.3"/><path d="M5 8 L8 5.5 L11 8" stroke="#fff" stroke-width="1.2" fill="none"/></svg>
<span class="t" style="left:120px;top:974.5px;font-size:10.9px;color:#fff">Watch</span>
<div class="a" style="left:5px;top:990px;width:92px;height:5px;background:#4D6082"></div>
<div class="a" style="left:102px;top:990px;width:51px;height:5px;background:#4D6082"></div>


<!-- EDITOR TAB -->
<div class="a" style="left:285px;top:110px;width:198px;height:21px;background:#EEF0F7"></div>
<svg class="a" style="left:291px;top:114px" width="10" height="14"><path d="M1 0.5 V13.5 M8 0.5 V13.5 M1 2.5 H8 M1 6.5 H8 M1 10.5 H8" stroke="#E3B341" stroke-width="1.4"/></svg>
<span class="t" style="left:307px;top:115px;font-size:11.3px;font-weight:bold;color:#111">MainProgram - MainRoutine</span>
<span class="t" style="left:468px;top:114px;font-size:13px;color:#555">&#10005;</span>
<div class="a" style="left:1595px;top:118px;width:0;height:0;border-left:5px solid transparent;border-right:5px solid transparent;border-top:5px solid #fff"></div>
<!-- EDITOR PANEL -->
<div class="a" style="left:283px;top:131px;width:1329px;height:691px;background:#D6DBE9"></div>
<div class="a" style="left:286px;top:133px;width:298px;height:23px;background:#CFD6E5"></div>
<svg class="a" style="left:288px;top:134px" width="6" height="20"><rect width="6" height="20" fill="url(#gp)"/></svg>
<!-- zoom in/out -->
<svg class="a" style="left:286px;top:131px" width="300" height="26" viewBox="286 131 300 26">
 <g transform="translate(299,137)">
  <circle cx="5.5" cy="5.5" r="4.6" fill="#fff" stroke="#222" stroke-width="1.6"/>
  <path d="M3 5.5 H8 M5.5 3 V8" stroke="#1F5F9E" stroke-width="1.4"/>
  <path d="M9 9 L13 13" stroke="#222" stroke-width="2.4" stroke-linecap="round"/>
 </g>
 <g transform="translate(321,137)">
  <circle cx="5.5" cy="5.5" r="4.6" fill="#fff" stroke="#222" stroke-width="1.6"/>
  <path d="M3 5.5 H8" stroke="#1F5F9E" stroke-width="1.4"/>
  <path d="M9 9 L13 13" stroke="#222" stroke-width="2.4" stroke-linecap="round"/>
 </g>
 <line x1="343.5" y1="134" x2="343.5" y2="154" stroke="#BCC5D8"/>
 <g transform="translate(351,137)" stroke="#A5A5A5" stroke-width="1" fill="none">
  <path d="M0.5 0 V14 M14.5 0 V14 M0.5 3.5 H14.5 M3.5 3.5 V11 H11.5 V3.5"/><path d="M9 9 L12 11 L9 13" />
 </g>
 <line x1="373.5" y1="134" x2="373.5" y2="154" stroke="#BCC5D8"/>
 <g transform="translate(380,137)" stroke="#A5A5A5" stroke-width="1" fill="none">
  <path d="M0.5 0.5 L5 5 M2 5 H5 V2"/><rect x="4.5" y="6.5" width="10" height="7"/><path d="M6.5 10 H8.5 M10 10 H12.5"/>
 </g>
 <g transform="translate(402,137)" stroke="#A5A5A5" stroke-width="1" fill="none">
  <rect x="0.5" y="0.5" width="10" height="7"/><path d="M2.5 4 H4.5 M6 4 H8.5"/><path d="M9 9 L14 14 M14 11 V14 H11"/>
 </g>
 <g transform="translate(425,137)" stroke="#A5A5A5" stroke-width="1" fill="none">
  <rect x="0.5" y="0.5" width="10" height="12"/><path d="M2.5 3 H8"/><rect x="8.5" y="8.5" width="5" height="5.5" fill="#D6DBE9"/>
 </g>
 <g transform="translate(447,137)" stroke="#A5A5A5" stroke-width="1" fill="none">
  <rect x="0.5" y="0.5" width="10" height="12"/><path d="M2.5 3.5 H8 M2.5 6.5 H8"/><rect x="8.5" y="8.5" width="5" height="5.5" fill="#D6DBE9"/>
 </g>
 <line x1="468.5" y1="134" x2="468.5" y2="154" stroke="#BCC5D8"/>
 <rect x="473.5" y="133.5" width="21" height="21" fill="#FDF1C9" stroke="#EED28D"/>
 <text x="476" y="147" font-family="Liberation Mono" font-size="8.2" font-weight="bold" fill="#222" letter-spacing="-0.4">abcd</text>
 <text x="498" y="141.5" font-family="Liberation Mono" font-size="7" font-weight="bold" fill="#222">ab</text>
 <text x="497.5" y="149.5" font-family="Liberation Mono" font-size="7" font-weight="bold" fill="#222">c</text>
 <path d="M510 140 V146.5 H503 M505.5 144 L503 146.5 L505.5 149" stroke="#222" stroke-width="1.6" fill="none"/>
 <text x="522" y="147" font-family="Liberation Sans" font-size="8.5" font-weight="bold" fill="#222">ab...</text>
 <path d="M543 142.5 H549 L546 146 Z" fill="#888"/>
 <line x1="556.5" y1="134" x2="556.5" y2="154" stroke="#BCC5D8"/>
 <text x="562" y="147" font-family="Liberation Sans" font-size="8.5" font-weight="bold" fill="#1F4E9E">&lt;ab&gt;</text>
</svg>
<!-- separator -->
<div class="a" style="left:286px;top:158px;width:1324px;height:4px;border-top:1px solid #BCC5D8;border-bottom:1px solid #BCC5D8;background:#E2E6EF"></div>
<!-- LADDER -->
<div class="a" style="left:286px;top:164px;width:1324px;height:637px;background:#FFFFFF;overflow:hidden">
  <div class="a" style="left:69px;top:0;width:1px;height:637px;background:#A8A8A8"></div>
  <span class="t" style="left:10px;top:20px;font-size:10.5px;color:#A0A0A0">0</span>
  <span class="t" style="left:10px;top:112px;font-size:10.5px;color:#A0A0A0">1</span>
  <span class="t" style="left:10px;top:204px;font-size:10.5px;color:#A0A0A0">2</span>
  <span class="t" style="left:10px;top:337px;font-size:10.5px;color:#A0A0A0">3</span>
  <span class="t" style="left:10px;top:443px;font-size:10.5px;color:#A0A0A0">4</span>
  <div class="a" style="left:70px;top:24px;width:1254px;height:1px;background:#A8A8A8"></div>
  <div class="a" style="left:70px;top:116px;width:1254px;height:1px;background:#A8A8A8"></div>
  <div class="a" style="left:70px;top:208px;width:1254px;height:1px;background:#A8A8A8"></div>
  <div class="a" style="left:70px;top:341px;width:1254px;height:1px;background:#A8A8A8"></div>
  <div class="a" style="left:70px;top:447px;width:1254px;height:1px;background:#A8A8A8"></div>
  <!-- rung 0 -->
  <span class="t" style="left:84px;top:5px;font-size:10.4px;color:#111">GeneralTimer.DN</span>
  <svg class="a" style="left:100px;top:18px" width="60" height="20" viewBox="0 0 60 20"><rect x="23" y="0" width="7" height="20" fill="#fff"/><rect x="1" y="3" width="19" height="7" fill="#33CC33"/><rect x="33" y="3" width="19" height="7" fill="#33CC33"/><rect x="1" y="6" width="19" height="1" fill="#7EE07E"/><rect x="33" y="6" width="19" height="1" fill="#7EE07E"/><path d="M18 0.5 H22.5 V13.5 H18 M35 0.5 H30.5 V13.5 H35" stroke="#9A9A9A" stroke-width="1" fill="none"/><path d="M27.5 3.5 L25.5 10.5" stroke="#8A8A8A" stroke-width="1"/></svg>
  <!-- rung 1 -->
  <span class="t" style="left:85px;top:97px;font-size:10.4px;color:#111">OneSecTimer.DN</span>
  <svg class="a" style="left:100px;top:110px" width="60" height="20" viewBox="0 0 60 20"><rect x="23" y="0" width="7" height="20" fill="#fff"/><rect x="1" y="3" width="19" height="7" fill="#33CC33"/><rect x="33" y="3" width="19" height="7" fill="#33CC33"/><rect x="1" y="6" width="19" height="1" fill="#7EE07E"/><rect x="33" y="6" width="19" height="1" fill="#7EE07E"/><path d="M18 0.5 H22.5 V13.5 H18 M35 0.5 H30.5 V13.5 H35" stroke="#9A9A9A" stroke-width="1" fill="none"/><path d="M27.5 3.5 L25.5 10.5" stroke="#8A8A8A" stroke-width="1"/></svg>
  <!-- rung 2 -->
  <span class="t" style="left:84px;top:189px;font-size:10.4px;color:#111">GeneralTimer.DN</span>
  <svg class="a" style="left:100px;top:202px" width="60" height="20" viewBox="0 0 60 20"><rect x="23" y="0" width="7" height="20" fill="#fff"/><path d="M18 0.5 H22.5 V13.5 H18 M35 0.5 H30.5 V13.5 H35" stroke="#9A9A9A" stroke-width="1" fill="none"/></svg>
  <!-- rung 3 GE -->
  <div class="a" style="left:97px;top:320px;width:113px;height:71px;background:#F2F2F2;border:1px solid #A8A8A8"></div>
  <div class="a" style="left:98px;top:321px;width:111px;height:13px;background:#DCDCDC;border-bottom:1px solid #A8A8A8"></div>
  <span class="t" style="left:106px;top:322.5px;font-size:10.8px;color:#111">GE</span>
  <span class="t" style="left:105.5px;top:337px;font-size:10.9px;color:#7A7A7A">Source A</span>
  <span class="t" style="left:168px;top:337px;font-size:10.8px;color:#111">States</span>
  <span class="t" style="left:192.5px;top:351px;font-size:10.8px;color:#111">0</span>
  <svg class="a" style="left:200px;top:350px" width="10" height="10"><path d="M0.5 5 L4.5 1 V3.5 H9.5 V6.5 H4.5 V9 Z" fill="#1010D8"/></svg>
  <span class="t" style="left:192.5px;top:365px;font-size:10.8px;color:#111">5</span>
  <span class="t" style="left:105.5px;top:365px;font-size:10.9px;color:#7A7A7A">Source B</span>
  <!-- rung 4 -->
  <span class="t" style="left:84px;top:427.3px;font-size:10.5px;color:#111">MixerDoorOpen</span>
  <svg class="a" style="left:97px;top:441px" width="60" height="20" viewBox="0 0 60 20"><rect x="23" y="0" width="7" height="20" fill="#fff"/><path d="M18 0.5 H22.5 V13.5 H18 M35 0.5 H30.5 V13.5 H35" stroke="#9A9A9A" stroke-width="1" fill="none"/></svg>
  <!-- selection box rung 2 -->
  <div class="a" style="left:1px;top:185px;width:72px;height:136px;border:2px solid #2067B8"></div>
  <!-- TON (hidden) -->
  <div class="a" style="left:1111px;top:2px;width:117px;height:90px;background:#F2F2F2;border:1px solid #A8A8A8"></div>
  <div class="a" style="left:1112px;top:3px;width:115px;height:13px;background:#DCDCDC"></div>
  <span class="t" style="left:1118px;top:4px;font-size:10px;color:#111">TON</span>
  <div class="a" style="left:1285px;top:0;width:1px;height:637px;background:#A8A8A8"></div>
  <div class="a" style="left:1306px;top:0;width:18px;height:637px;background:#F0F0F0"></div>
</div>
<div class="a" style="left:286px;top:164px;width:1324px;height:1px;background:#DDE1EA"></div>
<div class="a" style="left:286px;top:801px;width:1324px;height:1px;background:#C3C8D3"></div>
<!-- ladder hscroll -->
<div class="a" style="left:292px;top:807px;width:0;height:0;border-top:5px solid transparent;border-bottom:5px solid transparent;border-right:5px solid #6E6E6E"></div>
<div class="a" style="left:303px;top:808px;width:17px;height:8px;background:#C2C8D4"></div>

<!-- ERRORS -->
<div class="a" style="left:283px;top:828px;width:1329px;height:22px;background:#4D6082"></div>
<span class="t" style="left:293px;top:834px;font-size:10.7px;color:#fff">Errors</span>
<div class="a" style="left:283px;top:850px;width:1329px;height:35px;background:#D6DBE9"></div>
<div class="a" style="left:288px;top:856px;width:140px;height:25px;background:#FBF1C6;border:1.3px solid #2F6DB8"></div>
<svg class="a" style="left:295px;top:861px" width="15" height="15"><circle cx="7.5" cy="7.5" r="7" fill="#D42A2A"/><path d="M4.5 4.5 L10.5 10.5 M10.5 4.5 L4.5 10.5" stroke="#fff" stroke-width="2.2"/></svg>
<span class="t" style="left:385px;top:863px;font-size:10.3px;color:#222">0 Errors</span>
<div class="a" style="left:433px;top:856px;width:140px;height:25px;background:#FBF1C6;border:1.3px solid #2F6DB8"></div>
<svg class="a" style="left:441px;top:860px" width="15" height="15"><path d="M7.5 1 L14 14 H1 Z" fill="#F2C200" stroke="#F2C200" stroke-linejoin="round"/><rect x="6.6" y="5" width="1.8" height="5" fill="#111"/><rect x="6.6" y="11" width="1.8" height="1.8" fill="#111"/></svg>
<span class="t" style="left:511px;top:863px;font-size:10.3px;color:#222">0 Warnings</span>
<div class="a" style="left:578px;top:856px;width:140px;height:25px;background:#FBF1C6;border:1.3px solid #2F6DB8"></div>
<div class="a" style="left:586px;top:861px;width:15px;height:15px;border-radius:50%;background:#2B7CD3"></div>
<span class="t" style="left:652px;top:863px;font-size:10.3px;color:#222">2 Messages</span>
<div class="a" style="left:1357px;top:859px;width:249px;height:21px;background:#F5F5F5;border:1px solid #C8CDD8"></div>
<div class="a" style="left:283px;top:885px;width:1329px;height:65px;background:#FFFFFF"></div>
<span class="t mono" style="left:284px;top:890px;font-size:11.7px;color:#000">Exporting Sample_Application_v35.ACD to C:\Users\Sina\Desktop\Sample_Application_v35.L5X...</span>
<span class="t mono" style="left:284px;top:905px;font-size:11.7px;color:#000">Exporting...</span>
<span class="t mono" style="left:284px;top:920px;font-size:11.7px;color:#000">Complete - 0 error(s), 0 warning(s)</span>
<div class="a" style="left:1595px;top:885px;width:15px;height:65px;background:#F0F0F0"></div>
<div class="a" style="left:1596px;top:915px;width:13px;height:17px;background:#CDCDCD"></div>
<div class="a" style="left:1600px;top:893px;width:6px;height:6px;border-left:1.7px solid #4A4A4A;border-top:1.7px solid #4A4A4A;transform:rotate(45deg)"></div>
<div class="a" style="left:1600px;top:936px;width:6px;height:6px;border-right:1.7px solid #4A4A4A;border-bottom:1.7px solid #4A4A4A;transform:rotate(45deg)"></div>
<div class="a" style="left:283px;top:950px;width:1327px;height:16px;background:#F0F0F0"></div>
<div class="a" style="left:300px;top:950px;width:17px;height:16px;background:#CDCDCD"></div>
<div class="a" style="left:290px;top:954px;width:6px;height:6px;border-left:1.7px solid #4A4A4A;border-bottom:1.7px solid #4A4A4A;transform:rotate(45deg)"></div>
<div class="a" style="left:1581px;top:954px;width:6px;height:6px;border-right:1.7px solid #4A4A4A;border-top:1.7px solid #4A4A4A;transform:rotate(45deg)"></div>
<div class="a" style="left:1610px;top:885px;width:2px;height:80px;background:#D6DBE9"></div>


<!-- TOOLBOX -->
<div class="a" style="left:1618px;top:108px;width:300px;height:22px;background:#4D6082"></div>
<span class="t" style="left:1622px;top:114px;font-size:11.9px;color:#fff">Toolbox</span>
<div class="a" style="left:1865px;top:117px;width:0;height:0;border-left:5px solid transparent;border-right:5px solid transparent;border-top:5px solid #fff"></div>
<div class="a" style="left:1885px;top:114px;width:6px;height:6px;border:1.5px solid #fff;border-top-width:1px"></div>
<div class="a" style="left:1887px;top:120px;width:1.5px;height:4px;background:#fff"></div>
<div class="a" style="left:1883px;top:119px;width:10px;height:1.5px;background:#fff"></div>
<span class="t" style="left:1901px;top:112px;font-size:14px;color:#fff">&#10005;</span>
<div class="a" style="left:1618px;top:130px;width:300px;height:835px;background:#FCFCFC"></div>
<div class="a" style="left:1916px;top:130px;width:2px;height:835px;background:#C9CED9"></div>
<div class="a" style="left:1618px;top:156px;width:298px;height:2px;background:#BFC4CE"></div>
<span class="t" style="left:1626px;top:139px;font-size:10.4px;color:#555">Search</span>
<div class="a" style="left:1902px;top:137px;width:9px;height:9px;border:1.5px solid #444;border-radius:50%"></div>
<div class="a" style="left:1898px;top:147px;width:5px;height:1.5px;background:#444;transform:rotate(-45deg)"></div>
<div class="a" style="left:1618px;top:158px;width:298px;height:17px;background:#E6E9F2"></div>
<div class="a" style="left:1629px;top:166px;width:0;height:0;border-left:5px solid transparent;border-bottom:5px solid #999"></div>
<span class="t" style="left:1641px;top:161.8px;font-size:11.1px;font-weight:bold;color:#1B2A4A">Common</span>
<svg class="a" style="left:1645px;top:182px" width="24" height="62" viewBox="0 0 24 62">
 <path d="M3.5 2 V13 M19.5 2 V13 M3.5 7.5 H19.5" stroke="#8A8A8A" stroke-width="1" fill="none"/>
 <path d="M2.5 26 V37.5 M20.5 26 V37.5 M2.5 27.5 H20.5 M5.5 30.5 H17.5 V36.5 H5.5 Z" stroke="#8A8A8A" stroke-width="1" fill="none"/>
 <path d="M2.5 50 V61.5 M20.5 50 V61.5 M2.5 51.5 H20.5 M5.5 54.5 H17.5 V60.5 H5.5 Z M7.5 57.5 H15.5 M8.5 56.5 L7.5 57.5 L8.5 58.5 M14.5 56.5 L15.5 57.5 L14.5 58.5" stroke="#8A8A8A" stroke-width="1" fill="none"/>
</svg>
<span class="t" style="left:1678px;top:187.2px;font-size:10.7px;color:#707070">Rung</span>
<span class="t" style="left:1678px;top:211.2px;font-size:10.7px;color:#707070">Branch</span>
<span class="t" style="left:1678px;top:235.2px;font-size:10.7px;color:#707070">Branch Level</span>
<div class="a" style="left:1618px;top:258px;width:298px;height:16px;background:#E6E9F2"></div><span class="t" style="left:1641px;top:262px;font-size:11px;font-weight:bold;color:#1B2A4A">Advanced Math</span>
<div class="a" style="left:1618px;top:276px;width:298px;height:16px;background:#E6E9F2"></div><span class="t" style="left:1641px;top:280px;font-size:11px;font-weight:bold;color:#1B2A4A">Alarms</span>
<div class="a" style="left:1618px;top:294px;width:298px;height:16px;background:#E6E9F2"></div><span class="t" style="left:1641px;top:298px;font-size:11px;font-weight:bold;color:#1B2A4A">ASCII Conversion</span>
<div class="a" style="left:1618px;top:312px;width:298px;height:16px;background:#E6E9F2"></div><span class="t" style="left:1641px;top:316px;font-size:11px;font-weight:bold;color:#1B2A4A">ASCII String</span>
<div class="a" style="left:1618px;top:330px;width:298px;height:16px;background:#E6E9F2"></div><span class="t" style="left:1641px;top:334px;font-size:11px;font-weight:bold;color:#1B2A4A">Bit</span>
<div class="a" style="left:1618px;top:348px;width:298px;height:16px;background:#E6E9F2"></div><span class="t" style="left:1641px;top:352px;font-size:11px;font-weight:bold;color:#1B2A4A">Compare</span>
<div class="a" style="left:1618px;top:366px;width:298px;height:16px;background:#E6E9F2"></div><span class="t" style="left:1641px;top:370px;font-size:11px;font-weight:bold;color:#1B2A4A">Compute/Math</span>
<div class="a" style="left:1618px;top:384px;width:298px;height:16px;background:#E6E9F2"></div><span class="t" style="left:1641px;top:388px;font-size:11px;font-weight:bold;color:#1B2A4A">File/Misc.</span>
<div class="a" style="left:1618px;top:402px;width:298px;height:16px;background:#E6E9F2"></div><span class="t" style="left:1641px;top:406px;font-size:11px;font-weight:bold;color:#1B2A4A">File/Shift</span>
<div class="a" style="left:1618px;top:420px;width:298px;height:16px;background:#E6E9F2"></div><span class="t" style="left:1641px;top:424px;font-size:11px;font-weight:bold;color:#1B2A4A">For/Break</span>
<div class="a" style="left:1618px;top:438px;width:298px;height:16px;background:#E6E9F2"></div><span class="t" style="left:1641px;top:442px;font-size:11px;font-weight:bold;color:#1B2A4A">HMI</span>
<div class="a" style="left:1618px;top:456px;width:298px;height:16px;background:#E6E9F2"></div><span class="t" style="left:1641px;top:460px;font-size:11px;font-weight:bold;color:#1B2A4A">Input/Output</span>
<div class="a" style="left:1618px;top:474px;width:298px;height:16px;background:#E6E9F2"></div><span class="t" style="left:1641px;top:478px;font-size:11px;font-weight:bold;color:#1B2A4A">License</span>
<div class="a" style="left:1618px;top:492px;width:298px;height:16px;background:#E6E9F2"></div><span class="t" style="left:1641px;top:496px;font-size:11px;font-weight:bold;color:#1B2A4A">Math Conversions</span>
<div class="a" style="left:1618px;top:510px;width:298px;height:16px;background:#E6E9F2"></div><span class="t" style="left:1641px;top:514px;font-size:11px;font-weight:bold;color:#1B2A4A">Motion Config</span>
<div class="a" style="left:1618px;top:528px;width:298px;height:16px;background:#E6E9F2"></div><span class="t" style="left:1641px;top:532px;font-size:11px;font-weight:bold;color:#1B2A4A">Motion Coordinated</span>
<div class="a" style="left:1618px;top:546px;width:298px;height:16px;background:#E6E9F2"></div><span class="t" style="left:1641px;top:550px;font-size:11px;font-weight:bold;color:#1B2A4A">Motion Event</span>
<div class="a" style="left:1618px;top:564px;width:298px;height:16px;background:#E6E9F2"></div><span class="t" style="left:1641px;top:568px;font-size:11px;font-weight:bold;color:#1B2A4A">Motion Group</span>
<div class="a" style="left:1618px;top:582px;width:298px;height:16px;background:#E6E9F2"></div><span class="t" style="left:1641px;top:586px;font-size:11px;font-weight:bold;color:#1B2A4A">Motion Move</span>
<div class="a" style="left:1618px;top:600px;width:298px;height:16px;background:#E6E9F2"></div><span class="t" style="left:1641px;top:604px;font-size:11px;font-weight:bold;color:#1B2A4A">Motion State</span>
<div class="a" style="left:1618px;top:618px;width:298px;height:16px;background:#E6E9F2"></div><span class="t" style="left:1641px;top:622px;font-size:11px;font-weight:bold;color:#1B2A4A">Move/Logical</span>
<div class="a" style="left:1618px;top:636px;width:298px;height:16px;background:#E6E9F2"></div><span class="t" style="left:1641px;top:640px;font-size:11px;font-weight:bold;color:#1B2A4A">Process</span>
<div class="a" style="left:1618px;top:654px;width:298px;height:16px;background:#E6E9F2"></div><span class="t" style="left:1641px;top:658px;font-size:11px;font-weight:bold;color:#1B2A4A">Program Control</span>
<div class="a" style="left:1618px;top:672px;width:298px;height:16px;background:#E6E9F2"></div><span class="t" style="left:1641px;top:676px;font-size:11px;font-weight:bold;color:#1B2A4A">Sequencer</span>
<div class="a" style="left:1618px;top:690px;width:298px;height:16px;background:#E6E9F2"></div><span class="t" style="left:1641px;top:694px;font-size:11px;font-weight:bold;color:#1B2A4A">Special</span>
<div class="a" style="left:1618px;top:708px;width:298px;height:16px;background:#E6E9F2"></div><span class="t" style="left:1641px;top:712px;font-size:11px;font-weight:bold;color:#1B2A4A">Timer/Counter</span>
<div class="a" style="left:1618px;top:726px;width:298px;height:16px;background:#E6E9F2"></div><span class="t" style="left:1641px;top:730px;font-size:11px;font-weight:bold;color:#1B2A4A">Trigonometry</span>

<!-- STATUS BAR -->
<div class="a" style="left:0;top:996px;width:1918px;height:19px;background:#007ACC"></div>
<div class="a" style="left:0;top:1015px;width:1918px;height:2px;background:#2E3440"></div><div class="a" style="left:0;top:1015px;width:46px;height:2px;background:#0A0F1A"></div>
<span class="t" style="left:2px;top:1001.5px;font-size:11.2px;color:#fff">Enter BOOL operand</span>
<!-- status bar right -->
<span class="t" style="left:1696px;top:1001.5px;font-size:11.4px;color:#fff">Rung 2 of 43</span>
<span class="t" style="left:1798px;top:1001.5px;font-size:11px;color:#fff">APP</span>
<span class="t" style="left:1825px;top:1001.5px;font-size:11px;color:#5FAEEA">VER</span>
<svg class="a" style="left:1850px;top:997px" width="17" height="17"><path d="M8 8 V4.5 A3.2 3.2 0 0 1 14.4 4.5 V11" stroke="#1E1E1E" stroke-width="2.6" fill="none"/><path d="M8 8 V4.5 A3.2 3.2 0 0 1 14.4 4.5 V11" stroke="#fff" stroke-width="1.2" fill="none"/><rect x="1" y="8" width="10.5" height="8" fill="#fff" stroke="#1E1E1E" stroke-width="1"/><rect x="1.5" y="11.5" width="9.5" height="4" fill="#D01020"/></svg>





















<!-- CHAT WINDOW 1 -->
<div class="a" style="left:545px;top:171px;width:500px;height:700px;background:#121212;box-shadow:0 2px 12px rgba(0,0,0,.28);overflow:hidden">
<div class="a" style="left:0;top:0;width:500px;height:62px;background:#1B1B1B;border-bottom:1px solid #333"></div>
<svg class="a" style="left:15px;top:7px" width="14" height="19" viewBox="0 0 14 19"><defs><linearGradient id="fla" x1="0" y1="0" x2="0" y2="1"><stop offset="0" stop-color="#FBB03B"/><stop offset="1" stop-color="#E8590C"/></linearGradient></defs><path d="M7 0.5 C8 3.5 12.5 6 12.8 11 C13 15.5 10 18.5 6.8 18.5 C3.3 18.5 0.8 15.8 1 12.3 C1.2 9.8 2.5 8.3 3.5 7.3 C3.6 8.8 4.2 9.8 5 10.3 C4.6 6.5 6.2 3.5 7 0.5 Z" fill="url(#fla)"/><path d="M7.2 9.5 C8.4 11.3 10.2 12.6 10.1 14.7 C10 16.2 8.8 16.8 7.2 16.8 C5.4 16.8 4 16.1 4 14.7 C4 13.5 4.7 12.7 5.4 12.3 C5.5 13.2 6 13.8 6.6 14 C6.2 12.4 6.6 10.9 7.2 9.5 Z" fill="#2A1A12"/></svg>
<span class="t" style="left:38.0px;top:10.6px;font-size:12.60px;color:#C4C4C4;font-weight:bold;letter-spacing:-0.60px">PLC Copilot</span>
<div class="a" style="left:338px;top:11px;width:2px;height:2px;background:#BFBFBF"></div>
<div class="a" style="left:338px;top:15px;width:2px;height:2px;background:#BFBFBF"></div>
<div class="a" style="left:338px;top:19px;width:2px;height:2px;background:#BFBFBF"></div>
<svg class="a" style="left:380px;top:10px" width="10" height="13" viewBox="0 0 10 13"><path d="M2.5 1 H7.5 M3.3 1 V5 L1.5 8 H8.5 L6.7 5 V1 M5 8 V12" stroke="#F0802E" stroke-width="1.4" fill="none" stroke-linejoin="round"/></svg>
<div class="a" style="left:426px;top:15px;width:10px;height:2px;background:#9A9A9A"></div>
<svg class="a" style="left:471px;top:10px" width="12" height="12" viewBox="0 0 12 12"><path d="M1 1 L11 11 M11 1 L1 11" stroke="#CFCFCF" stroke-width="1.3"/></svg>
<div class="a" style="left:11px;top:43px;width:8px;height:8px;border-radius:50%;background:#22C55E"></div>
<span class="t" style="left:26.0px;top:41.8px;font-size:11.40px;color:#C8C8C8;font-family:'Liberation Mono',monospace">graph.adpro</span>
<svg class="a" style="left:464px;top:39px" width="18" height="16" viewBox="0 0 18 16"><path d="M1.5 3 Q1.5 1.5 3 1.5 H6.5 L8.5 3.8 H15 Q16.5 3.8 16.5 5.3 V13 Q16.5 14.5 15 14.5 H3 Q1.5 14.5 1.5 13 Z" stroke="#BDBDBD" stroke-width="1.5" fill="none" stroke-linejoin="round"/></svg>
<div class="a" style="left:0;top:62px;width:500px;height:540px;overflow:hidden;background:#121212"><div class="a" style="left:0;top:-62px;width:500px;height:700px"><div class="a" style="left:248px;top:86px;width:222px;height:44px;background:#6366F1;border-radius:15px 15px 4px 15px"></div>
<span class="t" style="left:264.5px;top:102.9px;font-size:13.60px;color:#FFFFFF">tell me what does this logic do?</span>
<span class="t" style="left:252.0px;top:137.3px;font-size:10.60px;color:#A8A8A8">08:08 PM</span>
<div class="a" style="left:24px;top:161px;width:424px;height:65px;background:#2A2A2A;border-radius:15px 15px 15px 4px;box-shadow:inset 0 0 0 1px #303030"></div>
<span class="t" style="left:40.0px;top:178.3px;font-size:13.60px;color:#EDEDED">I'll help you understand the logic in your PLC program. Let me</span>
<span class="t" style="left:40.0px;top:198.9px;font-size:13.60px;color:#EDEDED">first explore the structure of your project to see what's available.</span>
<span class="t" style="left:28.0px;top:235.0px;font-size:10.60px;color:#A8A8A8">08:09 PM</span>
<div class="a" style="left:429px;top:233px;width:9px;height:9px;border:1.2px solid #6A6A6A;border-radius:2px"></div><div class="a" style="left:432px;top:236px;width:9px;height:9px;border:1.2px solid #6A6A6A;border-radius:2px;background:#111"></div>
<div class="a" style="left:25px;top:270.8px;width:5px;height:5px;border-radius:50%;background:#22C55E"></div><span class="t" style="left:39.0px;top:268.0px;font-size:10.20px;color:#D4D4D4;font-family:'Liberation Mono',monospace">list_directory <span style="color:#8C8C8C">"."</span></span>
<div class="a" style="left:24px;top:296px;width:424px;height:64px;background:#2A2A2A;border-radius:15px 15px 15px 4px;box-shadow:inset 0 0 0 1px #303030"></div>
<span class="t" style="left:40.0px;top:311.9px;font-size:13.60px;color:#EDEDED">Now let me read the main logic to understand what your</span>
<span class="t" style="left:40.0px;top:332.2px;font-size:13.60px;color:#EDEDED">program does:</span>
<span class="t" style="left:28.0px;top:367.7px;font-size:10.60px;color:#A8A8A8">08:09 PM</span>
<div class="a" style="left:429px;top:366px;width:9px;height:9px;border:1.2px solid #6A6A6A;border-radius:2px"></div><div class="a" style="left:432px;top:369px;width:9px;height:9px;border:1.2px solid #6A6A6A;border-radius:2px;background:#111"></div>
<div class="a" style="left:25px;top:404.8px;width:5px;height:5px;border-radius:50%;background:#22C55E"></div><span class="t" style="left:39.0px;top:402.0px;font-size:10.20px;color:#D4D4D4;font-family:'Liberation Mono',monospace">read_file <span style="color:#8C8C8C">"task/Run_Every_Scan/main"</span></span>
<div class="a" style="left:24px;top:429px;width:424px;height:200px;background:#2A2A2A;border-radius:15px 15px 15px 4px;box-shadow:inset 0 0 0 1px #303030"></div>
<span class="t" style="left:40.0px;top:446.0px;font-size:13.60px;color:#EDEDED">Based on my analysis of your Main Task logic, this program</span>
<span class="t" style="left:40.0px;top:466.5px;font-size:13.60px;color:#EDEDED">controls a <b style="letter-spacing:-0.32px">motor and conveyor system with safety monitoring</b></span>
<span class="t" style="left:40.0px;top:487.0px;font-size:13.60px;color:#EDEDED"><b style="letter-spacing:-0.45px">and communications.</b> Here's what it does:</span>
<span class="t" style="left:40.0px;top:538.0px;font-size:18.00px;color:#F2F2F2;font-weight:bold;letter-spacing:-0.45px">Primary Motor Control&nbsp; ( &nbsp;<span style="color:#F2792A">Main Task: Rung2-7</span> &nbsp;)</span>
<div class="a" style="left:42px;top:575px;width:5px;height:5px;border-radius:50%;background:#E6E6E6"></div>
<span class="t" style="left:60.0px;top:571.5px;font-size:13.60px;color:#EDEDED"><b style="letter-spacing:-0.3px">Start/Stop Operations:</b> Direct pass-through of start and stop</span>
<span class="t" style="left:60.0px;top:592.0px;font-size:13.60px;color:#EDEDED">button inputs to outputs</span></div><div class="a" style="left:494px;top:0;width:5px;height:164px;background:#353535;border-radius:2px"></div></div>
<div class="a" style="left:10px;top:612px;width:480px;height:78px;background:#1A1A1A;border:1px solid #2F2F2F;border-radius:13px"></div>
<span class="t" style="left:23.0px;top:625.1px;font-size:13.20px;color:#A3A3A3">Ask me...</span>
<svg class="a" style="left:18px;top:666px" width="15" height="13" viewBox="0 0 15 13"><path d="M7.5 2.5 C5.5 1.2 3 1 1 1.3 V10.8 C3 10.5 5.5 10.8 7.5 12 C9.5 10.8 12 10.5 14 10.8 V1.3 C12 1 9.5 1.2 7.5 2.5 Z M7.5 2.5 V12" stroke="#6A6A6A" stroke-width="1.2" fill="none"/></svg>
<span class="t" style="left:39.0px;top:669.4px;font-size:10.80px;color:#6E6E6E">Read Mode</span>
<span class="t" style="left:389.0px;top:668.6px;font-size:11.10px;color:#7A7A7A">Clear Chat</span>
<svg class="a" style="left:461px;top:665px" width="17" height="16" viewBox="0 0 17 16"><path d="M1.5 6.5 L15.5 1 L10 14.5 L8 8.5 Z M8 8.5 L15.5 1" stroke="#F28A1E" stroke-width="1.5" fill="none" stroke-linejoin="round"/></svg>
</div>
<!-- CHAT WINDOW 2 -->
<div class="a" style="left:1144px;top:173px;width:500px;height:700px;background:#121212;box-shadow:0 2px 12px rgba(0,0,0,.28);overflow:hidden">
<div class="a" style="left:0;top:0;width:500px;height:62px;background:#1B1B1B;border-bottom:1px solid #333"></div>
<svg class="a" style="left:15px;top:7px" width="14" height="19" viewBox="0 0 14 19"><defs><linearGradient id="flb" x1="0" y1="0" x2="0" y2="1"><stop offset="0" stop-color="#FBB03B"/><stop offset="1" stop-color="#E8590C"/></linearGradient></defs><path d="M7 0.5 C8 3.5 12.5 6 12.8 11 C13 15.5 10 18.5 6.8 18.5 C3.3 18.5 0.8 15.8 1 12.3 C1.2 9.8 2.5 8.3 3.5 7.3 C3.6 8.8 4.2 9.8 5 10.3 C4.6 6.5 6.2 3.5 7 0.5 Z" fill="url(#flb)"/><path d="M7.2 9.5 C8.4 11.3 10.2 12.6 10.1 14.7 C10 16.2 8.8 16.8 7.2 16.8 C5.4 16.8 4 16.1 4 14.7 C4 13.5 4.7 12.7 5.4 12.3 C5.5 13.2 6 13.8 6.6 14 C6.2 12.4 6.6 10.9 7.2 9.5 Z" fill="#2A1A12"/></svg>
<span class="t" style="left:38.0px;top:10.6px;font-size:12.60px;color:#C4C4C4;font-weight:bold;letter-spacing:-0.60px">PLC Copilot</span>
<div class="a" style="left:338px;top:11px;width:2px;height:2px;background:#BFBFBF"></div>
<div class="a" style="left:338px;top:15px;width:2px;height:2px;background:#BFBFBF"></div>
<div class="a" style="left:338px;top:19px;width:2px;height:2px;background:#BFBFBF"></div>
<svg class="a" style="left:380px;top:10px" width="10" height="13" viewBox="0 0 10 13"><path d="M2.5 1 H7.5 M3.3 1 V5 L1.5 8 H8.5 L6.7 5 V1 M5 8 V12" stroke="#BDBDBD" stroke-width="1.4" fill="none" stroke-linejoin="round"/></svg>
<div class="a" style="left:426px;top:15px;width:10px;height:2px;background:#9A9A9A"></div>
<svg class="a" style="left:471px;top:10px" width="12" height="12" viewBox="0 0 12 12"><path d="M1 1 L11 11 M11 1 L1 11" stroke="#CFCFCF" stroke-width="1.3"/></svg>
<div class="a" style="left:11px;top:43px;width:8px;height:8px;border-radius:50%;background:#22C55E"></div>
<span class="t" style="left:26.0px;top:41.8px;font-size:11.50px;color:#C8C8C8;font-family:'Liberation Mono',monospace">Sample_Application_v35.L5X</span>
<svg class="a" style="left:464px;top:39px" width="18" height="16" viewBox="0 0 18 16"><path d="M1.5 3 Q1.5 1.5 3 1.5 H6.5 L8.5 3.8 H15 Q16.5 3.8 16.5 5.3 V13 Q16.5 14.5 15 14.5 H3 Q1.5 14.5 1.5 13 Z" stroke="#BDBDBD" stroke-width="1.5" fill="none" stroke-linejoin="round"/></svg>
<div class="a" style="left:0;top:62px;width:500px;height:540px;overflow:hidden;background:#121212"><div class="a" style="left:25px;top:16.0px;width:5px;height:5px;border-radius:50%;background:#22C55E"></div><span class="t" style="left:39.0px;top:13.2px;font-size:10.20px;color:#D4D4D4;font-family:'Liberation Mono',monospace">read_file <span style="color:#8C8C8C">"tasks/SafetyTask/SafetyProgram/MainRoutine"</span></span>
<div class="a" style="left:24px;top:41px;width:423px;height:64px;background:#2A2A2A;border-radius:15px 15px 15px 4px;box-shadow:inset 0 0 0 1px #303030"></div>
<span class="t" style="left:40.0px;top:58.0px;font-size:13.60px;color:#EDEDED">Now let me check the global tags to understand the system</span>
<span class="t" style="left:40.0px;top:77.7px;font-size:13.60px;color:#EDEDED">better:</span>
<span class="t" style="left:28.0px;top:114.6px;font-size:10.60px;color:#A8A8A8">08:10 PM</span>
<div class="a" style="left:429px;top:113px;width:9px;height:9px;border:1.2px solid #6A6A6A;border-radius:2px"></div><div class="a" style="left:432px;top:116px;width:9px;height:9px;border:1.2px solid #6A6A6A;border-radius:2px;background:#111"></div>
<div class="a" style="left:25px;top:150.3px;width:5px;height:5px;border-radius:50%;background:#22C55E"></div><span class="t" style="left:39.0px;top:147.5px;font-size:10.20px;color:#D4D4D4;font-family:'Liberation Mono',monospace">read_file <span style="color:#8C8C8C">"global_tags"</span></span>
<div class="a" style="left:24px;top:175px;width:424px;height:400px;background:#2A2A2A;border-radius:15px 15px 15px 4px;box-shadow:inset 0 0 0 1px #303030"></div>
<span class="t" style="left:40.0px;top:193.1px;font-size:22.50px;color:#F5F5F5;font-weight:bold;letter-spacing:-0.60px">Controls Narrative</span>
<span class="t" style="left:40.0px;top:261.8px;font-size:18.00px;color:#F2F2F2;font-weight:bold;letter-spacing:-0.70px">System Overview</span>
<span class="t" style="left:40.0px;top:291.0px;font-size:13.60px;color:#EDEDED">This PLC application controls a multi-tank fluid management</span>
<span class="t" style="left:40.0px;top:311.2px;font-size:13.60px;color:#EDEDED">system with alarm monitoring and data trending capabilities. The</span>
<span class="t" style="left:40.0px;top:331.4px;font-size:13.60px;color:#EDEDED">system includes four tanks with level monitoring, valve control</span>
<span class="t" style="left:40.0px;top:351.6px;font-size:13.60px;color:#EDEDED">operations, and comprehensive alarm management for both</span>
<span class="t" style="left:40.0px;top:371.8px;font-size:13.60px;color:#EDEDED">digital and analog signals.</span>
<span class="t" style="left:40.0px;top:423.8px;font-size:18.00px;color:#F2F2F2;font-weight:bold;letter-spacing:-0.70px">Task Structure</span>
<div class="a" style="left:43px;top:462.5px;width:5px;height:5px;border-radius:50%;background:#E6E6E6"></div>
<span class="t" style="left:60.0px;top:458.5px;font-size:13.60px;color:#EDEDED"><b style="letter-spacing:-0.65px">MainTask:</b> Continuous execution task (500ms watchdog,</span>
<span class="t" style="left:60.0px;top:478.3px;font-size:13.60px;color:#EDEDED">Priority 10) containing the primary control logic</span>
<div class="a" style="left:43px;top:506.5px;width:5px;height:5px;border-radius:50%;background:#E6E6E6"></div>
<span class="t" style="left:60.0px;top:502.5px;font-size:13.60px;color:#EDEDED"><b style="letter-spacing:-0.75px">SafetyTask:</b> Periodic safety task (20ms execution rate, 20ms</span>
<span class="t" style="left:60.0px;top:522.7px;font-size:13.60px;color:#EDEDED">watchdog, Priority 10) - currently contains no active rungs</span><div class="a" style="left:494px;top:75px;width:5px;height:87px;background:#353535;border-radius:2px"></div></div>
<div class="a" style="left:10px;top:612px;width:480px;height:78px;background:#1A1A1A;border:1px solid #2F2F2F;border-radius:13px"></div>
<span class="t" style="left:23.0px;top:625.1px;font-size:13.20px;color:#A3A3A3">Ask me...</span>
<svg class="a" style="left:18px;top:666px" width="15" height="13" viewBox="0 0 15 13"><path d="M7.5 2.5 C5.5 1.2 3 1 1 1.3 V10.8 C3 10.5 5.5 10.8 7.5 12 C9.5 10.8 12 10.5 14 10.8 V1.3 C12 1 9.5 1.2 7.5 2.5 Z M7.5 2.5 V12" stroke="#6A6A6A" stroke-width="1.2" fill="none"/></svg>
<span class="t" style="left:39.0px;top:669.4px;font-size:10.80px;color:#6E6E6E">Read Mode</span>
<span class="t" style="left:389.0px;top:668.6px;font-size:11.10px;color:#7A7A7A">Clear Chat</span>
<svg class="a" style="left:461px;top:665px" width="17" height="16" viewBox="0 0 17 16"><path d="M1.5 6.5 L15.5 1 L10 14.5 L8 8.5 Z M8 8.5 L15.5 1" stroke="#F28A1E" stroke-width="1.5" fill="none" stroke-linejoin="round"/></svg>
</div>
<!-- /CHATS -->
</body></html>
